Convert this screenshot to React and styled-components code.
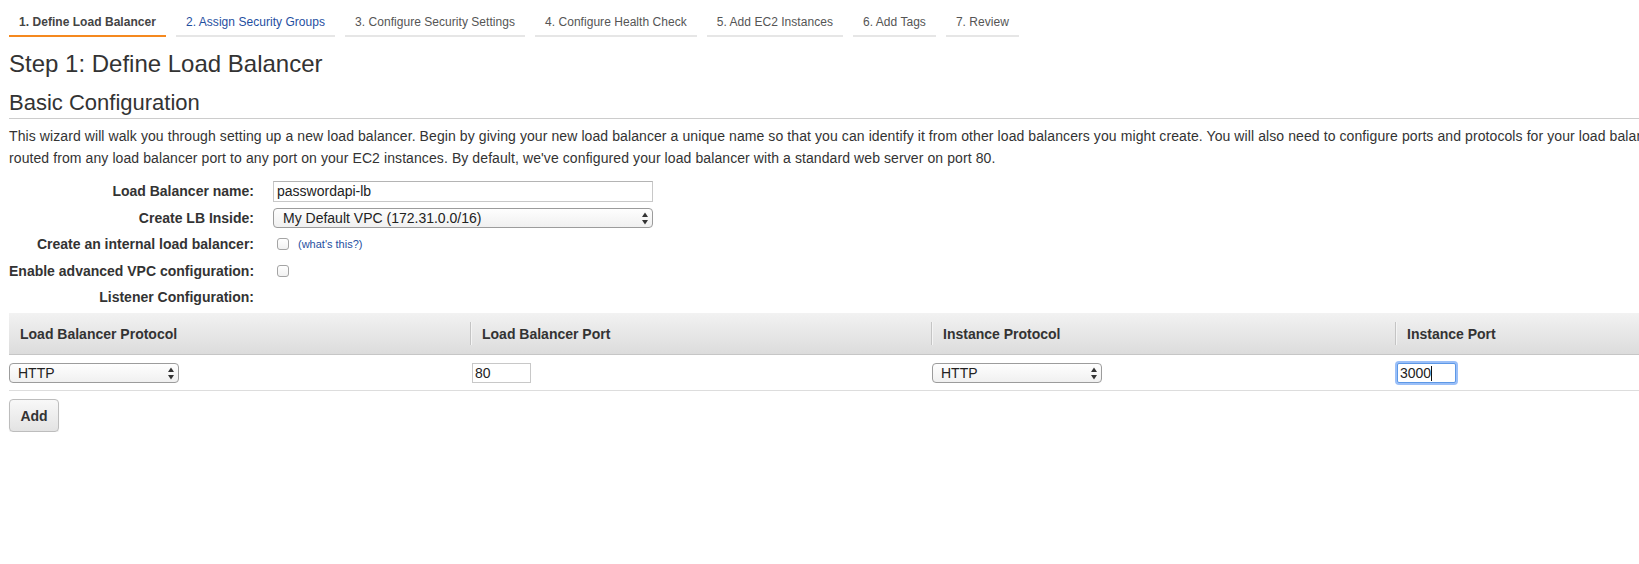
import styled, { createGlobalStyle } from "styled-components";

const GlobalStyle = createGlobalStyle`
  html, body {
    margin: 0;
    padding: 0;
    overflow: hidden;
    background: #fff;
  }
  body {
    font-family: "Liberation Sans", Arial, Helvetica, sans-serif;
    font-size: 14px;
    color: #333;
  }
`;

const steps = [
  { label: "1. Define Load Balancer", state: "active" },
  { label: "2. Assign Security Groups", state: "link" },
  { label: "3. Configure Security Settings", state: "idle" },
  { label: "4. Configure Health Check", state: "idle" },
  { label: "5. Add EC2 Instances", state: "idle" },
  { label: "6. Add Tags", state: "idle" },
  { label: "7. Review", state: "idle" },
];

const columns = [
  "Load Balancer Protocol",
  "Load Balancer Port",
  "Instance Protocol",
  "Instance Port",
];

function Arrows() {
  return (
    <svg width="6" height="13" viewBox="0 0 6 13">
      <path d="M3 0.5 L6 5 L0 5 Z" fill="#333" />
      <path d="M3 12.5 L6 8 L0 8 Z" fill="#333" />
    </svg>
  );
}

function Select({ value, width, pad }) {
  return (
    <SelectWrap $width={width}>
      <NativeSelect defaultValue={value} $pad={pad}>
        <option>{value}</option>
      </NativeSelect>
      <ArrowSlot>
        <Arrows />
      </ArrowSlot>
    </SelectWrap>
  );
}

export default function App() {
  return (
    <>
      <GlobalStyle />
      <Page>
        <Tabs>
          {steps.map((s) => (
            <Tab key={s.label} $state={s.state}>
              {s.label}
            </Tab>
          ))}
        </Tabs>

        <Title>Step 1: Define Load Balancer</Title>
        <SubTitle>Basic Configuration</SubTitle>

        <Intro>
          This wizard will walk you through setting up a new load balancer. Begin by giving your new load
          balancer a unique name so that you can identify it from other load balancers you might create. You
          will also need to configure ports and protocols for your load balancer. Traffic from your clients can be
          <br />
          routed from any load balancer port to any port on your EC2 instances. By default, we've configured
          your load balancer with a standard web server on port 80.
        </Intro>

        <FormGrid>
          <Label>Load Balancer name:</Label>
          <Control>
            <TextInput defaultValue="passwordapi-lb" $width={380} />
          </Control>

          <Label>Create LB Inside:</Label>
          <Control>
            <Select value="My Default VPC (172.31.0.0/16)" width={380} pad={9} />
          </Control>

          <Label>Create an internal load balancer:</Label>
          <Control>
            <Check type="checkbox" />
            <Help href="#">(what's this?)</Help>
          </Control>

          <Label>Enable advanced VPC configuration:</Label>
          <Control>
            <Check type="checkbox" />
          </Control>

          <Label>Listener Configuration:</Label>
          <Control />
        </FormGrid>

        <ListenerHead>
          {columns.map((c, i) => (
            <HeadCell key={c} $divider={i > 0}>
              {c}
            </HeadCell>
          ))}
        </ListenerHead>
        <ListenerRow>
          <Cell>
            <Select value="HTTP" width={170} pad={8} />
          </Cell>
          <Cell>
            <PortInput defaultValue="80" />
          </Cell>
          <Cell>
            <Select value="HTTP" width={170} pad={8} />
          </Cell>
          <Cell>
            <FocusWrap>
              <PortInput defaultValue="3000" $focused />
              <Caret />
            </FocusWrap>
          </Cell>
        </ListenerRow>

        <AddButton>Add</AddButton>
      </Page>
    </>
  );
}

const Page = styled.div`
  width: 1845px;
  padding-left: 9px;
`;

const Tabs = styled.nav`
  display: flex;
  gap: 10px;
  padding-top: 15px;
`;

const Tab = styled.div`
  font-size: 12px;
  line-height: 14px;
  letter-spacing: 0.04px;
  padding: 0 10px 6px;
  white-space: nowrap;
  font-weight: ${({ $state }) => ($state === "active" ? "bold" : "normal")};
  color: ${({ $state }) =>
    $state === "active" ? "#444" : $state === "link" ? "#1f4f9f" : "#555"};
  border-bottom: 2px solid
    ${({ $state }) => ($state === "active" ? "#f5891f" : "#e6e6e6")};
`;

const Title = styled.h1`
  margin: 13px 0 0;
  font-size: 24px;
  line-height: 28px;
  font-weight: normal;
  color: #333;
`;

const SubTitle = styled.h2`
  margin: 12px 0 0;
  padding-bottom: 2px;
  font-size: 22px;
  line-height: 26px;
  font-weight: normal;
  color: #333;
  border-bottom: 1px solid #cccccc;
`;

const Intro = styled.p`
  margin: 6px 0 0;
  line-height: 22px;
  letter-spacing: 0.09px;
  white-space: nowrap;
`;

const FormGrid = styled.div`
  margin-top: 9px;
  display: grid;
  grid-template-columns: 245px 1fr;
  grid-auto-rows: 26.5px;
  column-gap: 19px;
  align-items: center;
`;

const Label = styled.div`
  text-align: right;
  font-weight: bold;
  white-space: nowrap;
`;

const Control = styled.div`
  display: flex;
  align-items: center;
  gap: 9px;
`;

const TextInput = styled.input`
  box-sizing: border-box;
  width: ${({ $width }) => $width}px;
  height: 21px;
  margin: 0;
  padding: 0 3px;
  border: 1px solid #c8c8c8;
  border-top-color: #b4b4b4;
  font: 14px "Liberation Sans", Arial, sans-serif;
  color: #222;
  outline: none;
`;

const SelectWrap = styled.div`
  position: relative;
  width: ${({ $width }) => $width}px;
  height: 20px;
`;

const NativeSelect = styled.select`
  appearance: none;
  box-sizing: border-box;
  width: 100%;
  height: 100%;
  margin: 0;
  padding: 0 20px 0 ${({ $pad }) => $pad}px;
  border: 1px solid #9c9c9c;
  border-radius: 4px;
  background: linear-gradient(#fefefe, #f0f0f0);
  font: 14px "Liberation Sans", Arial, sans-serif;
  color: #222;
  outline: none;
`;

const ArrowSlot = styled.span`
  position: absolute;
  right: 5px;
  top: 4px;
  display: flex;
  pointer-events: none;
`;

const Check = styled.input`
  appearance: none;
  box-sizing: border-box;
  width: 12px;
  height: 12px;
  margin: 0 0 0 4px;
  border: 1px solid #a4a4a4;
  border-radius: 3px;
  background: linear-gradient(#ffffff, #f1f1f1);
`;

const Help = styled.a`
  font-size: 11px;
  color: #1f4f9f;
  text-decoration: none;
`;

const columnsTemplate = "462px 461px 464px 458px";

const ListenerHead = styled.div`
  margin-top: 2.5px;
  display: grid;
  grid-template-columns: ${columnsTemplate};
  height: 41px;
  background: linear-gradient(#f2f2f2, #dcdcdc);
  border-bottom: 1px solid #c6c6c6;
`;

const HeadCell = styled.div`
  position: relative;
  display: flex;
  align-items: center;
  padding-left: 11px;
  font-weight: bold;
  white-space: nowrap;
  &::before {
    content: "";
    display: ${({ $divider }) => ($divider ? "block" : "none")};
    position: absolute;
    left: -1px;
    top: 9px;
    bottom: 9px;
    width: 1px;
    background: #c4c4c4;
    box-shadow: 1px 0 0 #f4f4f4;
  }
`;

const ListenerRow = styled.div`
  display: grid;
  grid-template-columns: ${columnsTemplate};
  height: 35px;
  align-items: center;
  border-bottom: 1px solid #dddddd;
`;

const Cell = styled.div`
  display: flex;
  align-items: center;
`;

const PortInput = styled.input`
  box-sizing: border-box;
  width: 59px;
  height: 20px;
  margin: 0 0 0 1px;
  padding: 0 2px;
  font: 14px "Liberation Sans", Arial, sans-serif;
  color: #222;
  outline: none;
  border: 1px solid ${({ $focused }) => ($focused ? "#5d98e6" : "#c8c8c8")};
  box-shadow: ${({ $focused }) =>
    $focused ? "0 0 0 2px rgba(120, 170, 245, 0.75)" : "none"};
  border-radius: ${({ $focused }) => ($focused ? "2px" : "0")};
`;

const FocusWrap = styled.div`
  position: relative;
  display: flex;
`;

const Caret = styled.span`
  position: absolute;
  left: 35px;
  top: 3px;
  width: 1px;
  height: 15px;
  background: #111;
`;

const AddButton = styled.button`
  margin-top: 8px;
  box-sizing: border-box;
  width: 50px;
  height: 33px;
  padding: 0;
  border: 1px solid #bdbdbd;
  border-radius: 4px;
  background: linear-gradient(#f8f8f8, #e3e3e3);
  box-shadow: 0 1px 1px rgba(0, 0, 0, 0.08);
  font: bold 14px "Liberation Sans", Arial, sans-serif;
  color: #333;
`;
